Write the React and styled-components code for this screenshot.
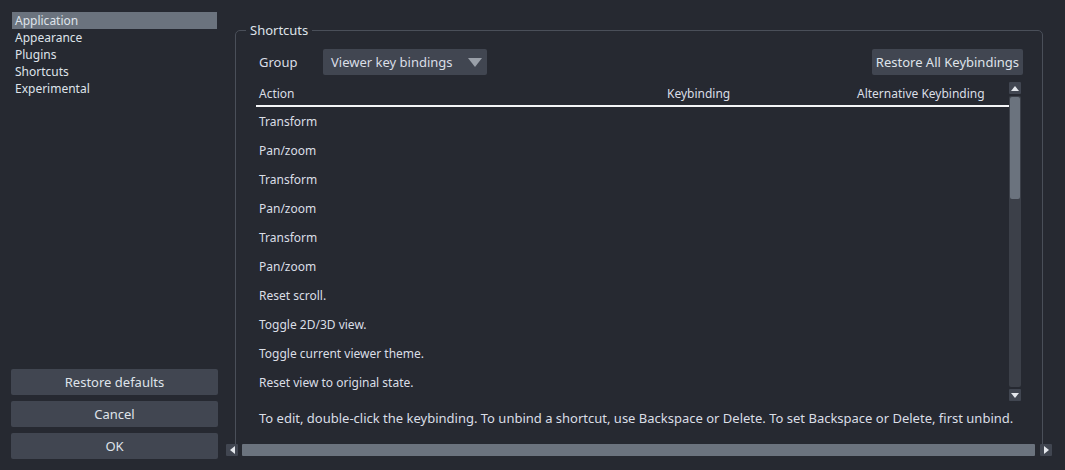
import React from "react"
import styled, { createGlobalStyle } from "styled-components"

const GlobalStyle = createGlobalStyle`
  html, body {
    margin: 0;
    padding: 0;
    background: #262931;
  }

  body {
    font-family: "Noto Sans", "DejaVu Sans", sans-serif;
    font-size: 13px;
    color: #dadee6;
  }
`

const pages = ["Application", "Appearance", "Plugins", "Shortcuts", "Experimental"]

const rows = [
  "Transform",
  "Pan/zoom",
  "Transform",
  "Pan/zoom",
  "Transform",
  "Pan/zoom",
  "Reset scroll.",
  "Toggle 2D/3D view.",
  "Toggle current viewer theme.",
  "Reset view to original state.",
]

const App = () => {
  return (
    <Window>
      <GlobalStyle />
      <Sidebar>
        <PageList>
          {pages.map((page, i) => (
            <PageItem key={page} selected={i === 0}>{page}</PageItem>
          ))}
        </PageList>
        <SideButtons>
          <Button>Restore defaults</Button>
          <Button>Cancel</Button>
          <Button>OK</Button>
        </SideButtons>
      </Sidebar>

      <Main>
        <Viewport>
          <GroupBox>
            <GroupTitle>Shortcuts</GroupTitle>
            <Toolbar>
              <ToolbarLabel>Group</ToolbarLabel>
              <Combo>
                Viewer key bindings
                <ComboArrow />
              </Combo>
              <Spacer />
              <Button compact>Restore All Keybindings</Button>
            </Toolbar>

            <Table>
              <TableBody>
                <HeaderRow>
                  <Cell>Action</Cell>
                  <Cell>Keybinding</Cell>
                  <Cell>Alternative Keybinding</Cell>
                </HeaderRow>
                {rows.map((row, i) => (
                  <Row key={i}>
                    <Cell>{row}</Cell>
                    <Cell />
                    <Cell />
                  </Row>
                ))}
              </TableBody>
              <VScroll>
                <ArrowBox><Triangle dir="up" /></ArrowBox>
                <VTrack>
                  <VHandle />
                </VTrack>
                <ArrowBox><Triangle dir="down" /></ArrowBox>
              </VScroll>
            </Table>

            <Hint>
              To edit, double-click the keybinding. To unbind a shortcut, use Backspace or Delete. To set Backspace or Delete, first unbind.
            </Hint>
          </GroupBox>
        </Viewport>

        <HScroll>
          <ArrowBox><Triangle dir="left" /></ArrowBox>
          <HHandle />
          <ArrowBox><Triangle dir="right" /></ArrowBox>
        </HScroll>
      </Main>
    </Window>
  )
}

const Window = styled.div`
  width: 1065px;
  height: 470px;
  display: flex;
  overflow: hidden;
  background: #262931;
`

const Sidebar = styled.div`
  width: 207px;
  padding: 12px 0 11px 11px;
  display: flex;
  flex-direction: column;
  justify-content: space-between;
`

const PageList = styled.div`
  display: flex;
  flex-direction: column;
  font-size: 12px;
`

const PageItem = styled.div`
  height: 17px;
  line-height: 17px;
  margin: 0 1px;
  padding-left: 3px;
  color: #dfe3ea;

  ${props => props.selected && `
    background: #6b737e;
  `}
`

const SideButtons = styled.div`
  display: flex;
  flex-direction: column;
  gap: 6px;
`

const Button = styled.div`
  height: 26px;
  line-height: 26px;
  padding: 0 ${props => props.compact ? "4px" : "8px"};
  border-radius: 2px;
  background: #414651;
  color: #dfe3ea;
  text-align: center;
  white-space: nowrap;
`

const Main = styled.div`
  margin-left: 8px;
  width: 826px;
  display: flex;
  flex-direction: column;
  padding-bottom: 14px;
`

const Viewport = styled.div`
  flex: 1;
  overflow: hidden;
  padding: 30px 9px 0;
`

const GroupBox = styled.div`
  position: relative;
  height: 440px;
  border: 1px solid #4a4f59;
  border-radius: 5px;
  padding: 18px 19px 0 20px;
  display: flex;
  flex-direction: column;
`

const GroupTitle = styled.div`
  position: absolute;
  top: -10px;
  left: 10px;
  padding: 0 4px;
  line-height: 18px;
  background: #262931;
  color: #dfe3ea;
`

const Toolbar = styled.div`
  height: 26px;
  display: flex;
  align-items: center;
`

const ToolbarLabel = styled.div`
  width: 64px;
  padding-left: 3px;
`

const Combo = styled.div`
  width: 156px;
  height: 26px;
  padding-left: 8px;
  border-radius: 2px;
  background: #414651;
  display: flex;
  align-items: center;
  justify-content: space-between;
`

const ComboArrow = styled.div`
  width: 0;
  height: 0;
  margin-right: 5px;
  border-left: 7px solid transparent;
  border-right: 7px solid transparent;
  border-top: 9px solid #9aa0a9;
`

const Spacer = styled.div`
  flex: 1;
`

const Table = styled.div`
  margin-top: 7px;
  height: 319px;
  display: flex;
  margin-right: 2px;
  font-size: 12px;
`

const TableBody = styled.div`
  flex: 1;
  display: flex;
  flex-direction: column;
`

const gridCols = `
  display: grid;
  grid-template-columns: 408px 190px 1fr;
`

const HeaderRow = styled.div`
  ${gridCols}
  height: 23px;
  align-items: center;
  border-bottom: 2px solid #f4f5f7;
`

const Row = styled.div`
  ${gridCols}
  height: 29px;
  align-items: center;
`

const Cell = styled.div`
  padding-left: 3px;
  white-space: nowrap;
`

const VScroll = styled.div`
  width: 12px;
  display: flex;
  flex-direction: column;
  gap: 2px;
`

const ArrowBox = styled.div`
  width: 12px;
  height: 12px;
  flex-shrink: 0;
  background: #414651;
  border-radius: 1px;
  display: flex;
  align-items: center;
  justify-content: center;
`

const Triangle = styled.div`
  width: 0;
  height: 0;

  ${props => props.dir === "up" && `
    border-left: 4px solid transparent;
    border-right: 4px solid transparent;
    border-bottom: 5px solid #e4e7ec;
  `}

  ${props => props.dir === "down" && `
    border-left: 4px solid transparent;
    border-right: 4px solid transparent;
    border-top: 5px solid #e4e7ec;
  `}

  ${props => props.dir === "left" && `
    border-top: 4px solid transparent;
    border-bottom: 4px solid transparent;
    border-right: 5px solid #e4e7ec;
  `}

  ${props => props.dir === "right" && `
    border-top: 4px solid transparent;
    border-bottom: 4px solid transparent;
    border-left: 5px solid #e4e7ec;
  `}
`

const VTrack = styled.div`
  flex: 1;
  background: #3c4049;
  border-radius: 2px;
  padding: 1px;
`

const VHandle = styled.div`
  height: 102px;
  background: #6b737e;
  border-radius: 2px;
`

const Hint = styled.div`
  margin-top: 9px;
  padding-left: 3px;
  line-height: 17px;
  white-space: nowrap;
`

const HScroll = styled.div`
  height: 12px;
  display: flex;
  align-items: center;
  gap: 4px;
`

const HHandle = styled.div`
  flex: 1;
  height: 12px;
  margin-right: 1px;
  background: #6b737e;
  border-radius: 1px;
`

export default App
